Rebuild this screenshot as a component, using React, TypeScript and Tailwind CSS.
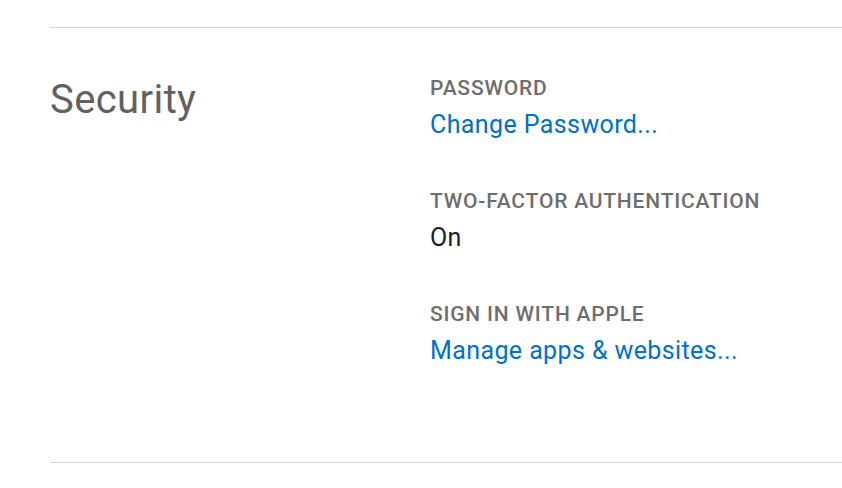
import React from 'react';

const items = [
  { label: 'PASSWORD', value: 'Change Password...', link: true },
  { label: 'TWO-FACTOR AUTHENTICATION', value: 'On', link: false },
  { label: 'SIGN IN WITH APPLE', value: 'Manage apps & websites...', link: true },
];

export default function App() {
  return (
    <div className="w-[842px] h-[488px] bg-white overflow-hidden pl-[50px] pt-[27px] font-['Roboto',sans-serif]">
      <section className="border-t border-b border-[#d6d6d6] h-[436px] flex">
        <h2 className="w-[380px] pt-[48px] text-[40px] leading-[48px] tracking-[0.4px] text-[#616161]">
          Security
        </h2>
        <div className="pt-[47px] flex flex-col gap-[47px]">
          {items.map((item) => (
            <div key={item.label}>
              <div className="text-[21px] leading-[26px] tracking-[0.8px] font-medium text-[#6e6e6e]">
                {item.label}
              </div>
              <div
                className={`mt-[7px] text-[25px] leading-[33px] tracking-[0.4px] ${item.link ? 'text-[#0070c9]' : 'text-[#1d1d1f]'}`}
              >
                {item.value}
              </div>
            </div>
          ))}
        </div>
      </section>
    </div>
  );
}
